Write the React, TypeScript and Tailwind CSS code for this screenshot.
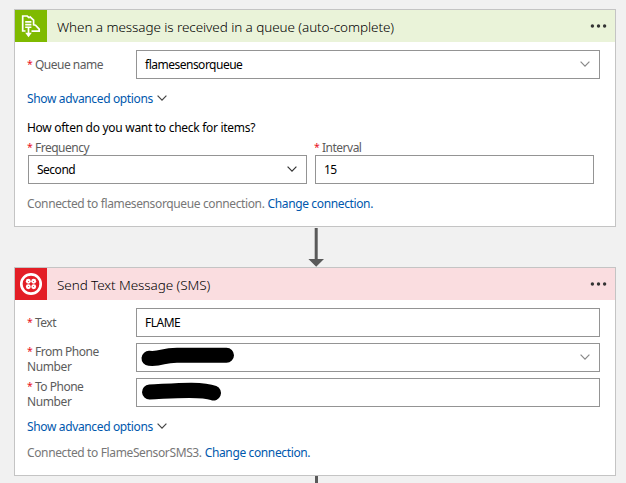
import type { ReactNode } from "react";

function Chevron({ className }: { className: string }) {
  return (
    <svg className={className} viewBox="0 0 10 6" fill="none" stroke="currentColor" strokeWidth="1.2">
      <path d="M0.6 0.7 L5 5.1 L9.4 0.7" />
    </svg>
  );
}

function QueueIcon() {
  return (
    <svg className="size-8 shrink-0 bg-[#7fba00]" viewBox="0 0 32 32" fill="none" stroke="#fff">
      <path d="M10.5 21 H7.7 V6 H12.2 L14.6 8.2" strokeWidth="1.7" />
      <path d="M14.6 6.4 L18.6 10.2 V14.8 L20.5 15.2 L24.2 19.2 V21.2 H16.5" strokeWidth="1.7" />
      <path d="M10.2 11.9 H16.4 M10.2 14.6 H16.4 M10.2 17.3 H16.4" strokeWidth="1.6" />
      <path d="M13.5 18 V25" strokeWidth="1.7" />
      <path d="M10.2 22.8 H16.8 L13.5 27.2 Z" fill="#fff" stroke="none" />
    </svg>
  );
}

function TwilioIcon() {
  return (
    <svg className="size-8 shrink-0 bg-[#e31e26]" viewBox="0 0 32 32">
      <circle cx="16" cy="16" r="9.7" fill="none" stroke="#fff" strokeWidth="2.7" />
      <g fill="#fff">
        <circle cx="13.3" cy="13.3" r="2.45" />
        <circle cx="18.7" cy="13.3" r="2.45" />
        <circle cx="13.3" cy="18.7" r="2.45" />
        <circle cx="18.7" cy="18.7" r="2.45" />
      </g>
      <g fill="#e31e26">
        <circle cx="13.6" cy="13.6" r="0.5" />
        <circle cx="18.4" cy="13.6" r="0.5" />
        <circle cx="13.6" cy="18.4" r="0.5" />
        <circle cx="18.4" cy="18.4" r="0.5" />
        <circle cx="16" cy="16" r="0.6" />
      </g>
    </svg>
  );
}

function Header({ icon, title, tint }: { icon: ReactNode; title: string; tint: string }) {
  return (
    <div className={`flex h-8 items-center ${tint}`}>
      {icon}
      <div className="ml-[10px] flex-1 pt-[3px] text-[13.5px] font-light tracking-[-0.08px] whitespace-nowrap text-black">
        {title}
      </div>
      <svg className="mr-[7px] mb-px h-4 w-[18px] text-[#333]" viewBox="0 0 18 16" fill="currentColor">
        <circle cx="2.4" cy="8" r="1.7" />
        <circle cx="8.5" cy="8" r="1.7" />
        <circle cx="14.6" cy="8" r="1.7" />
      </svg>
    </div>
  );
}

function Label({ children }: { children: ReactNode }) {
  return (
    <div className="flex w-[109px] shrink-0 leading-[15px] tracking-[-0.5px] whitespace-nowrap text-[#5c5c5c]">
      <span className="w-2 shrink-0 text-[10.5px] leading-[14px] text-[#e81123]">*</span>
      <span>{children}</span>
    </div>
  );
}

function WrappedLabel({ first, second }: { first: string; second: string }) {
  return (
    <div className="w-[109px] shrink-0 pt-px">
      <Label>{first}</Label>
      <div className="leading-[15px] tracking-[-0.4px] text-[#5c5c5c]">{second}</div>
    </div>
  );
}

function Field({ children, arrow, className = "flex-1" }: { children?: ReactNode; arrow?: string; className?: string }) {
  return (
    <div className={`flex h-[29px] items-center justify-between border border-[#949494] bg-white text-black ${className}`}>
      <div className="pt-px pl-2 tracking-[-0.5px]">{children}</div>
      {arrow && <Chevron className={`mr-[9px] mb-[2px] h-[6px] w-[10px] ${arrow}`} />}
    </div>
  );
}

function Advanced() {
  return (
    <div className="flex h-5 items-center text-[#0058ad]">
      <span className="w-[126px] tracking-[-0.36px] whitespace-nowrap">Show advanced options</span>
      <Chevron className="mb-[2px] ml-[4px] h-[6px] w-[10px] text-[#444]" />
    </div>
  );
}

function Connection({ name }: { name: string }) {
  return (
    <div className="flex h-5 items-center gap-[3px] tracking-[-0.37px] whitespace-nowrap text-[#777]">
      <span>{name}</span>
      <span className="text-[#0058ad]">Change connection.</span>
    </div>
  );
}

export default function App() {
  return (
    <div className="flex h-[483px] w-[626px] flex-col overflow-hidden bg-[#f1f1f1] pt-[9px] pl-[14px] font-['Noto_Sans','Open_Sans',sans-serif] text-[12px]">
      <section className="h-[218px] w-[602px] shrink-0 border border-[#c4c4c4] bg-white">
        <Header
          icon={<QueueIcon />}
          tint="bg-[#eaf3d9]"
          title="When a message is received in a queue (auto-complete)"
        />
        <div className="flex flex-col pt-2 pr-[15px] pl-3">
          <div className="flex items-center">
            <Label>Queue name</Label>
            <Field arrow="text-[#888]">flamesensorqueue</Field>
          </div>
          <div className="mt-[10px]"><Advanced /></div>
          <div className="mt-[9px] h-5 leading-5 tracking-[-0.29px] text-black">How often do you want to check for items?</div>
          <div className="mt-[2px] flex gap-2 pl-px">
            <div className="flex w-[279px] flex-col">
              <div className="-ml-px h-[15px]"><Label>Frequency</Label></div>
              <Field className="w-[279px]" arrow="text-[#333]">Second</Field>
            </div>
            <div className="flex w-[279px] flex-col">
              <div className="-ml-px h-[15px]"><Label>Interval</Label></div>
              <Field className="w-[279px]">15</Field>
            </div>
          </div>
          <div className="mt-[10px]"><Connection name="Connected to flamesensorqueue connection." /></div>
        </div>
      </section>
      <svg className="ml-[294px] h-10 w-4 shrink-0" viewBox="0 0 16 40" fill="#5a5a5a">
        <path d="M6.7 1 H9.7 V32 H16 L8.2 39.7 L0.4 32 H6.7 Z" />
      </svg>
      <section className="h-[209px] w-[602px] shrink-0 border border-[#c4c4c4] bg-white">
        <Header icon={<TwilioIcon />} tint="bg-[#fadde0]" title="Send Text Message (SMS)" />
        <div className="flex flex-col pt-2 pr-[15px] pl-3">
          <div className="flex flex-col gap-[6px]">
            <div className="flex items-center">
              <Label>Text</Label>
              <Field>FLAME</Field>
            </div>
            <div className="flex h-[29px] items-start">
              <WrappedLabel first="From Phone" second="Number" />
              <Field arrow="text-[#888]">
                <svg className="-mt-px -ml-2 h-[27px] w-[110px]" viewBox="0 0 110 27">
                  <path d="M12 14.3 C26 15.3 24 11.3 40 11.3 H89.5" fill="none" stroke="#000" strokeWidth="15" strokeLinecap="round" />
                </svg>
              </Field>
            </div>
            <div className="flex h-[29px] items-start">
              <WrappedLabel first="To Phone" second="Number" />
              <Field>
                <svg className="-mt-px -ml-2 h-[27px] w-[110px]" viewBox="0 0 110 27">
                  <path d="M12.5 13 C35 12 64 9 76.5 14" fill="none" stroke="#000" strokeWidth="15" strokeLinecap="round" />
                </svg>
              </Field>
            </div>
          </div>
          <div className="mt-[10px]"><Advanced /></div>
          <div className="mt-[6px]"><Connection name="Connected to FlameSensorSMS3." /></div>
        </div>
      </section>
      <div className="ml-[301px] h-[7px] w-[3px] shrink-0 bg-[#5a5a5a]" />
    </div>
  );
}
